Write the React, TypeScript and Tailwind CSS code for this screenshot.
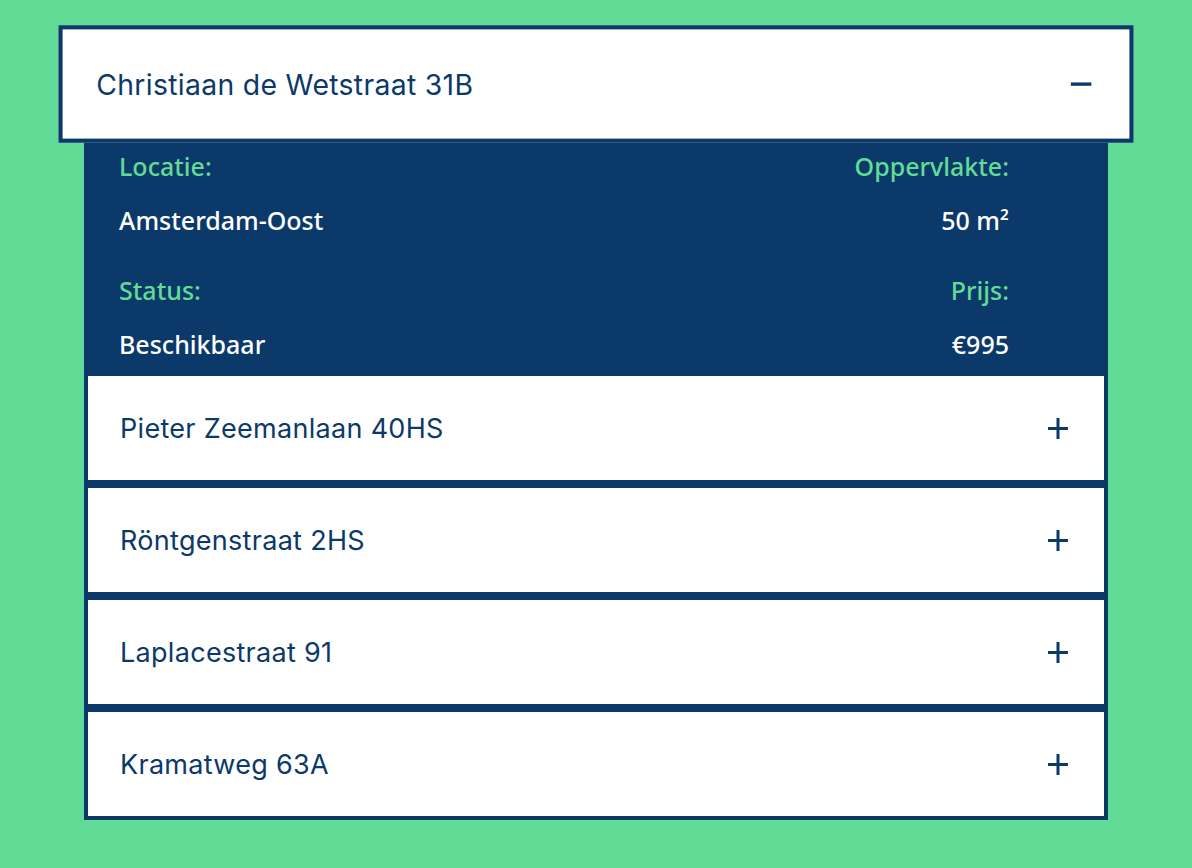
import React from "react";

const items = ["Pieter Zeemanlaan 40HS", "Röntgenstraat 2HS", "Laplacestraat 91", "Kramatweg 63A"];

function Plus() {
  return (
    <svg width="20" height="21" viewBox="0 0 20 21" className="block">
      <rect x="8.5" y="0" width="3" height="21" fill="#0b396a" />
      <rect x="0" y="9" width="20" height="3" fill="#0b396a" />
    </svg>
  );
}

function Minus() {
  return (
    <svg width="20" height="4" viewBox="0 0 20 4" className="block">
      <rect x="0" y="0.5" width="20" height="3.2" fill="#0b396a" />
    </svg>
  );
}

const titleFont = { fontFamily: "Inter, 'Liberation Sans', sans-serif" };
const detailFont = { fontFamily: "'Noto Sans', 'Open Sans', sans-serif" };

export default function App() {
  return (
    <div className="min-h-[868px] w-full bg-[#62db96] pt-[28px]">
      <div className="mx-auto w-[1024px]">
        <div className="relative z-10 flex h-[112px] scale-[1.05] items-center justify-between border-4 border-[#0b396a] bg-white pl-[32px] pr-[36px]">
          <span className="text-[27px] leading-none tracking-[0.3px] text-[#0b396a]" style={titleFont}>
            Christiaan de Wetstraat 31B
          </span>
          <Minus />
        </div>
        <div className="bg-[#0b396a] pl-[35px] pr-[99px] pt-[8px] pb-[10px]" style={detailFont}>
          <div className="grid grid-cols-2 gap-y-[34px] text-[25px] font-medium leading-[36px]">
            <div>
              <div className="mb-[18px] text-[#62db96]">Locatie:</div>
              <div className="text-white">Amsterdam-Oost</div>
            </div>
            <div className="text-right">
              <div className="mb-[18px] text-[#62db96]">Oppervlakte:</div>
              <div className="text-white">50 m²</div>
            </div>
            <div>
              <div className="mb-[18px] text-[#62db96]">Status:</div>
              <div className="text-white">Beschikbaar</div>
            </div>
            <div className="text-right">
              <div className="mb-[18px] text-[#62db96]">Prijs:</div>
              <div className="text-white">€995</div>
            </div>
          </div>
        </div>
        {items.map((t) => (
          <div
            key={t}
            className="flex h-[112px] items-center justify-between border-4 border-[#0b396a] bg-white pl-[32px] pr-[36px]"
          >
            <span className="text-[27px] leading-none tracking-[0.3px] text-[#0b396a]" style={titleFont}>
              {t}
            </span>
            <Plus />
          </div>
        ))}
      </div>
    </div>
  );
}
